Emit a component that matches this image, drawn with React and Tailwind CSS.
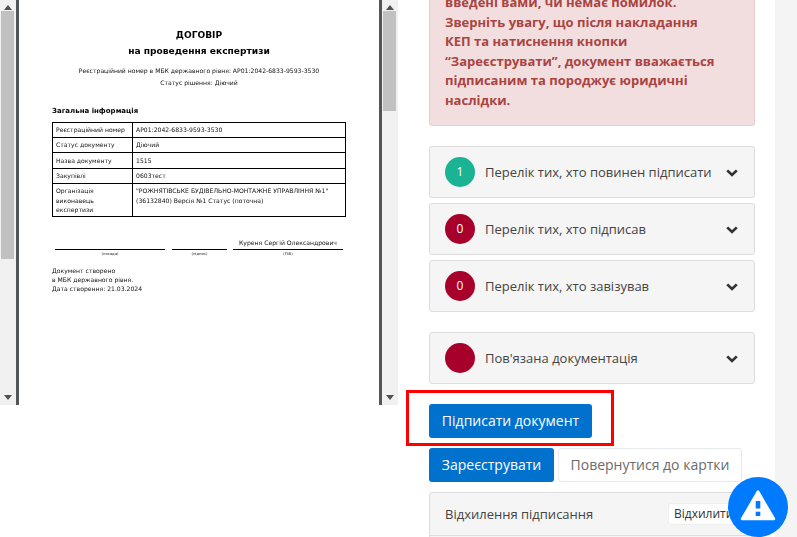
import React from "react";

const rows = [
  ["Реєстраційний номер", "АР01:2042-6833-9593-3530", "h-[15px]"],
  ["Статус документу", "Діючий", "h-[15px]"],
  ["Назва документу", "1515", "h-[16px]"],
  ["Закупівлі", "0603тест", "h-[15px]"],
];

function Arrow({ up }) {
  return (
    <div className="w-4 h-[15px] flex items-center justify-center">
      <svg width="8" height="5" viewBox="0 0 8 5">
        <path d={up ? "M0 5 L4 0 L8 5 Z" : "M0 0 L4 5 L8 0 Z"} fill="#505050" />
      </svg>
    </div>
  );
}

function Scrollbar({ thumb }) {
  return (
    <div className="w-4 h-full bg-[#f1f1f1] flex flex-col shrink-0">
      <Arrow up />
      <div className={`w-[13px] ${thumb} bg-[#c1c1c1] ml-px`} />
      <div className="flex-1" />
      <Arrow />
    </div>
  );
}

function Sign({ w, label, name }) {
  return (
    <div className={`${w} flex flex-col items-center`}>
      <div className="h-[13px] text-[6.1px] leading-[13px] text-[#111] whitespace-nowrap">{name}</div>
      <div className="w-full border-t border-black" />
      <div className="text-[3.8px] leading-[5px] text-[#222] mt-px">{label}</div>
    </div>
  );
}

function Doc() {
  return (
    <div className="flex-1 bg-white font-['DejaVu_Sans',sans-serif] text-[#111] pl-[33px] pr-[33px] pt-[28px] blur-[0.2px] overflow-hidden">
      <div className="text-center font-bold text-black text-[9.1px] leading-[14px]">ДОГОВІР</div>
      <div className="text-center font-bold text-black text-[9.1px] leading-[14px] mt-[2px]">на проведення експертизи</div>
      <div className="text-center text-[6.1px] leading-[12px] mt-[7px]">Реєстраційний номер в МБК державного рівня: АР01:2042-6833-9593-3530</div>
      <div className="text-center text-[6.1px] leading-[12px]">Статус рішення: Діючий</div>
      <div className="font-bold text-black text-[7px] leading-[10px] mt-[17px] mb-[6px]">Загальна інформація</div>
      <table className="w-[294px] border-collapse border border-black text-[6.1px] table-fixed">
        <tbody>
          {rows.map(([a, b, h]) => (
            <tr key={a} className={h}>
              <td className="w-[80px] border border-black px-[3px] py-0 align-middle">{a}</td>
              <td className="border border-black px-[3px] py-0 align-middle">{b}</td>
            </tr>
          ))}
          <tr className="h-[33px]">
            <td className="border border-black px-[3px] align-top leading-[9.5px] pt-[2px]">Організація<br />виконавець<br />експертизи</td>
            <td className="border border-black px-[3px] align-top leading-[10px] pt-[2px]">"РОЖНЯТІВСЬКЕ БУДІВЕЛЬНО-МОНТАЖНЕ УПРАВЛІННЯ №1"<br />(36132840) Версія №1 Статус (поточна)</td>
          </tr>
        </tbody>
      </table>
      <div className="flex gap-[7px] ml-[3px] mt-[19px]">
        <Sign w="w-[110px]" label="(посада)" />
        <Sign w="w-[55px]" label="(підпис)" />
        <div className="-ml-[1px]"><Sign w="w-[110px]" label="(ПІБ)" name="Куреня Сергій Олександрович" /></div>
      </div>
      <div className="text-[6.1px] leading-[9px] mt-[10px]">
        Документ створено<br />в МБК державного рівня.<br />Дата створення: 21.03.2024
      </div>
    </div>
  );
}

function Panel({ count, color, title, cls = "" }) {
  return (
    <div className={`h-[52px] bg-[#f5f5f5] border border-[#ddd] rounded-[3px] flex items-center pl-[15px] pr-[16px] ${cls}`}>
      <div className={`w-[30px] h-[30px] rounded-full ${color} text-white text-[12px] flex items-center justify-center shrink-0`}>{count}</div>
      <div className="flex-1 ml-[10px] text-[13px] text-[#444] whitespace-nowrap pt-[2px]">{title}</div>
      <svg width="12" height="8" viewBox="0 0 12 8" className="shrink-0 mt-[2px]">
        <path d="M1.2 1.4 L6 6 L10.8 1.4" fill="none" stroke="#333" strokeWidth="2.7" />
      </svg>
    </div>
  );
}

export default function App() {
  return (
    <div className="relative h-[537px] w-[797px] overflow-hidden bg-white flex font-['Open_Sans',sans-serif]">
      <div className="w-[400px] shrink-0">
        <div className="w-[398px] h-[405px] flex">
          <Scrollbar thumb="h-[248px] -mt-[4px]" />
          <div className="flex-1 flex border-x-[3px] border-[#525659]">
            <Doc />
          </div>
          <Scrollbar thumb="h-[100px] -mt-[4px]" />
        </div>
      </div>

      <div className="w-[375px] shrink-0 pl-[29px] pr-[20px]">
        <div className="-mt-[17px] h-[143px] bg-[#f2dede] border border-[#ebccd1] rounded-[3px] px-[15px] pt-[9px] text-[#a94442] font-bold text-[13px] leading-[19.5px]">
          введені вами, чи немає помилок.<br />
          Зверніть увагу, що після накладання<br />
          КЕП та натиснення кнопки<br />
          “Зареєструвати”, документ вважається<br />
          підписаним та породжує юридичні<br />
          наслідки.
        </div>
        <div className="mt-[20px] flex flex-col gap-[5px]">
          <Panel count="1" color="bg-[#1ab394]" title="Перелік тих, хто повинен підписати" />
          <Panel count="0" color="bg-[#a7002b]" title="Перелік тих, хто підписав" />
          <Panel count="0" color="bg-[#a7002b]" title="Перелік тих, хто завізував" />
        </div>
        <Panel color="bg-[#a7002b]" title="Пов'язана документація" cls="mt-[20px]" />
        <button className="mt-[20px] block h-[34px] w-[163px] bg-[#0072ce] rounded-[3px] text-white text-[14px] pb-[2px]">Підписати документ</button>
        <div className="mt-[10px] flex gap-[4px]">
          <button className="h-[34px] w-[125px] bg-[#0072ce] rounded-[3px] text-white text-[14px] pb-[2px]">Зареєструвати</button>
          <button className="h-[34px] w-[184px] bg-white border border-[#e7eaec] rounded-[3px] text-[#6b6b6b] text-[14px] pb-[2px]">Повернутися до картки</button>
        </div>
        <div className="mt-[10px] h-[60px] bg-[#f5f5f5] border border-[#ddd] rounded-[3px]">
          <div className="h-[43px] border-b border-[#ddd] flex items-center pl-[15px] pr-[10px] text-[13px] text-[#444]">
            <span className="flex-1 pt-[2px]">Відхилення підписання</span>
            <span className="w-[76px] h-[22px] bg-white border border-[#eee] rounded-[3px] pl-[5px] leading-[20px] text-[12px] text-[#333]">Відхилити</span>
          </div>
        </div>
      </div>

      <div className="flex-1 bg-[#f4f4f4]" />

      <div className="absolute left-[406px] top-[390px] w-[208px] h-[56px] border-[3px] border-[#ff0000] pointer-events-none" />

      <div className="absolute left-[728px] top-[477px] w-[60px] h-[60px] rounded-full bg-[#007bff]">
        <svg width="60" height="60" viewBox="0 0 60 60">
          <path d="M30 14.5 L46 42 L14 42 Z" fill="white" stroke="white" strokeWidth="2.5" strokeLinejoin="round" />
          <rect x="27.7" y="24" width="4.6" height="7.5" fill="#007bff" />
          <rect x="27.7" y="34.7" width="4.6" height="4.3" fill="#007bff" />
        </svg>
      </div>
    </div>
  );
}
